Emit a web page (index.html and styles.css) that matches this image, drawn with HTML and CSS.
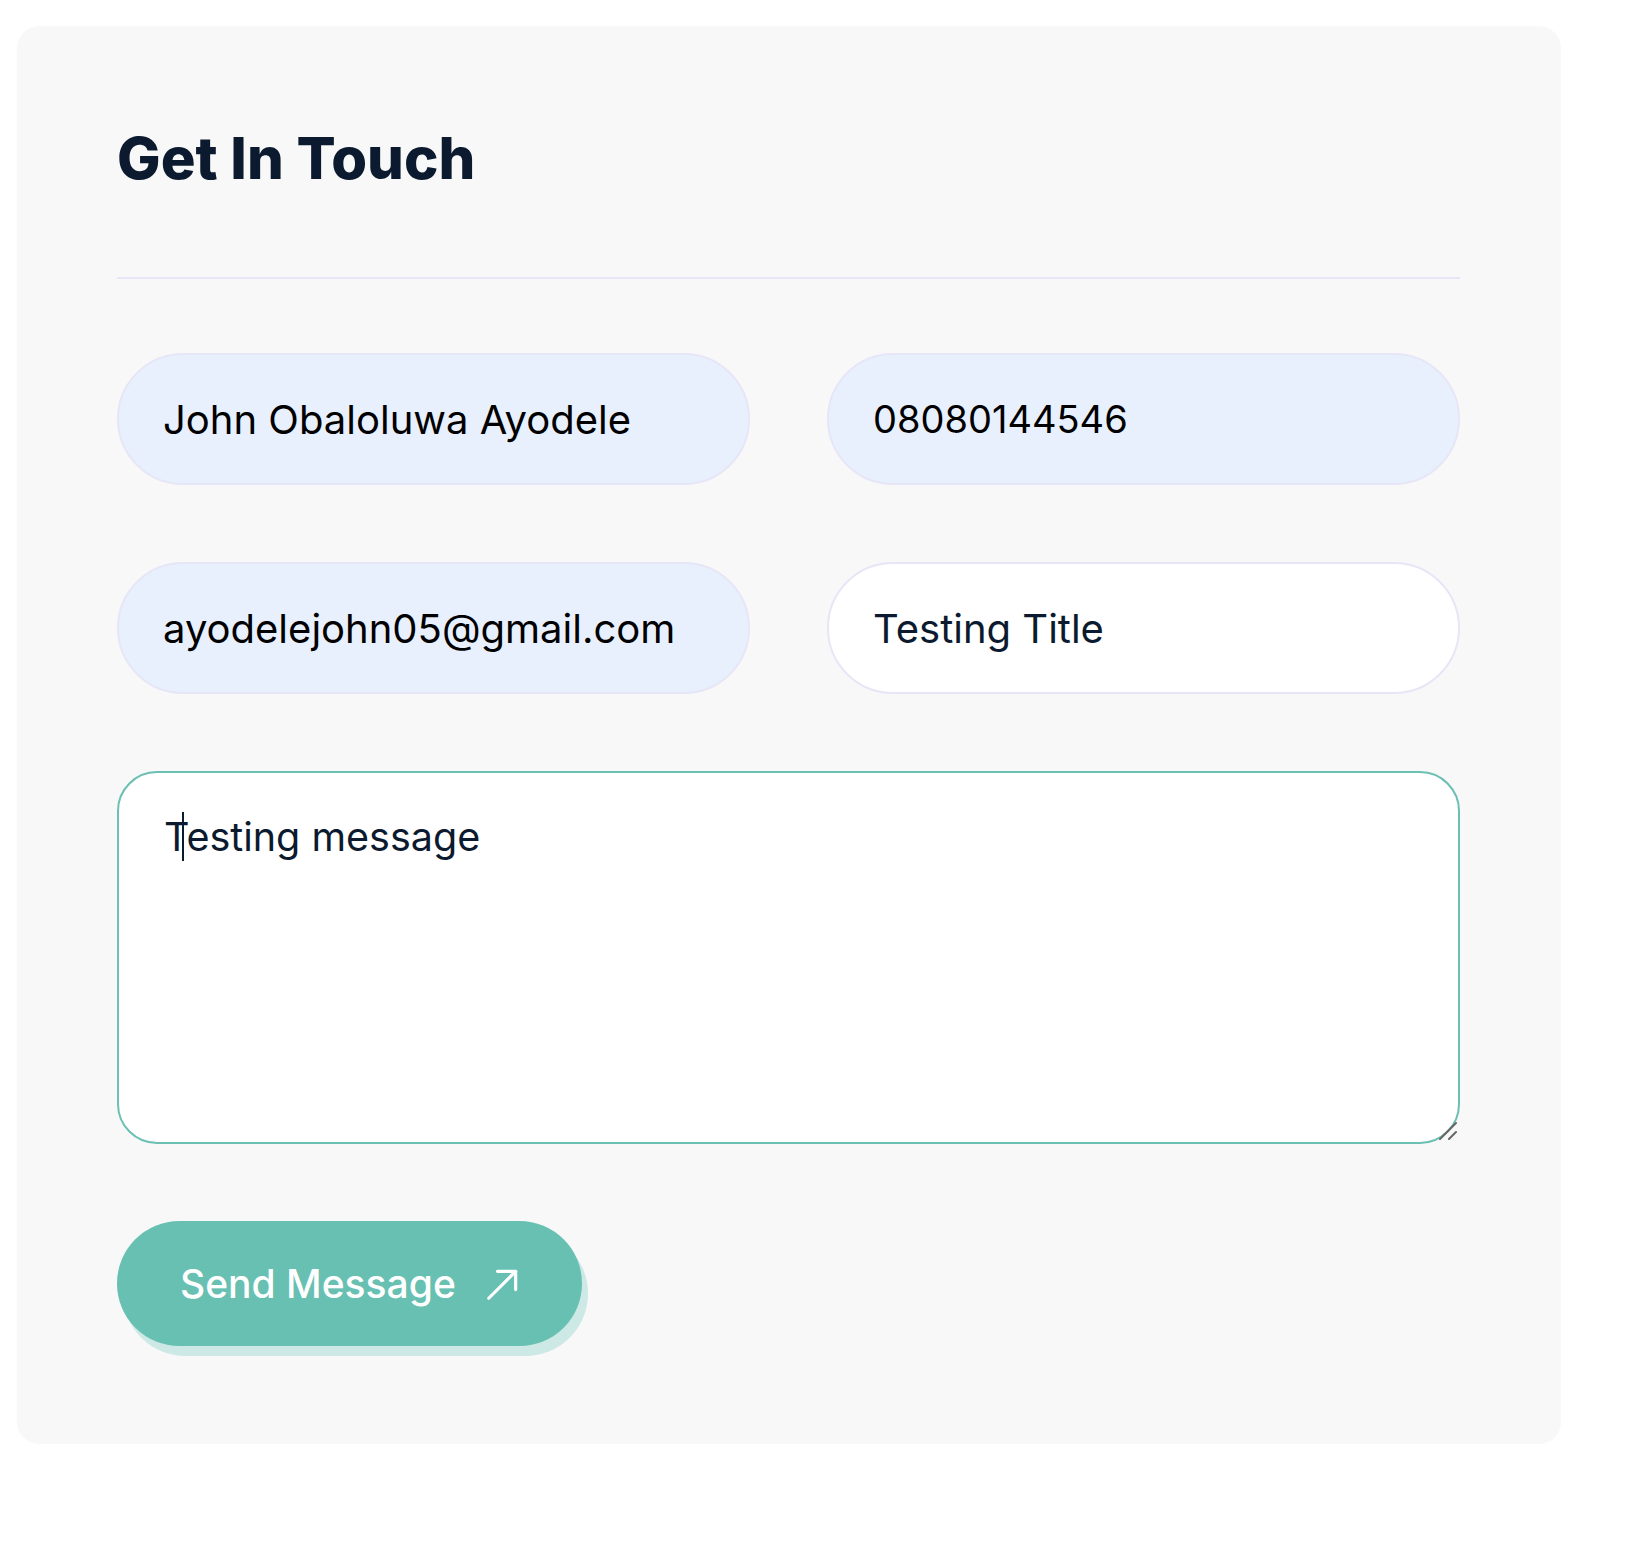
FILE: index.html
```html
<!DOCTYPE html>
<html lang="en">
<head>
    <meta charset="UTF-8">
    <meta name="viewport" content="width=device-width, initial-scale=1.0">
    <title>Get In Touch</title>
    <link rel="stylesheet" href="styles.css">
</head>
<body>
    <div class="card">
        <h1>Get In Touch</h1>
        <div class="divider"></div>
        <form class="contact-form">
            <div class="row">
                <input type="text" class="field filled" value="John Obaloluwa Ayodele">
                <input type="tel" class="field filled phone" value="08080144546">
            </div>
            <div class="row">
                <input type="email" class="field filled" value="ayodelejohn05@gmail.com">
                <input type="text" class="field" value="Testing Title">
            </div>
            <div class="message-wrap">
                <textarea class="message">Testing message</textarea>
                <span class="caret"></span>
                <svg class="grip" width="18" height="18" viewBox="0 0 18 18" fill="none" stroke="#666" stroke-width="2" stroke-linecap="round">
                    <path d="M1 17 L17 1"/>
                    <path d="M10 17 L17 10"/>
                </svg>
            </div>
            <div class="actions">
                <button type="button" class="send">
                    Send Message
                    <svg width="38" height="38" viewBox="0 0 24 24" fill="none" stroke="#fff" stroke-width="2" stroke-linecap="round" stroke-linejoin="round">
                        <path d="M3 21 L20 4"/>
                        <path d="M8.5 4 H20 V15.5"/>
                    </svg>
                </button>
            </div>
        </form>
    </div>
</body>
</html>
```

FILE: styles.css
```css
body {
    margin: 0;
    background: #fff;
    font-family: 'Inter', 'Noto Sans', sans-serif;
}
.card {
    margin: 26px 0 0 17px;
    width: 1544px;
    height: 1418px;
    box-sizing: border-box;
    padding: 96px 101px 0 100px;
    background: #f8f8f8;
    border-radius: 22px;
}
h1 {
    margin: 0;
    font-size: 58px;
    line-height: 72px;
    font-weight: 800;
    color: #0b1a2e;
    letter-spacing: 0;
}
.divider {
    height: 2px;
    background: #e6e6f7;
    margin-top: 83px;
}
.contact-form {
    display: flex;
    flex-direction: column;
    gap: 77px;
    margin-top: 74px;
}
.row {
    display: grid;
    grid-template-columns: 1fr 1fr;
    gap: 77px;
}
.field {
    height: 132px;
    box-sizing: border-box;
    padding: 0 44px;
    border: 2px solid #e6e6f7;
    border-radius: 66px;
    background: #fff;
    font-family: 'Inter', 'Noto Sans', sans-serif;
    font-size: 40px;
    color: #0b1a2e;
    outline: none;
    min-width: 0;
}
.field.filled {
    background: #e8f0fe;
    color: #000;
}
.field.phone {
    font-size: 38px;
}
.message-wrap {
    position: relative;
}
.message {
    display: block;
    width: 100%;
    height: 373px;
    box-sizing: border-box;
    padding: 40px 45px;
    border: 2px solid #6bbfb3;
    border-radius: 40px;
    background: #fff;
    font-family: 'Inter', 'Noto Sans', sans-serif;
    font-size: 39.5px;
    color: #0b1a2e;
    outline: none;
    resize: none;
}
.caret {
    position: absolute;
    left: 65px;
    top: 41px;
    width: 2px;
    height: 49px;
    background: #0b1a2e;
}
.grip {
    position: absolute;
    right: 3px;
    bottom: 4px;
}
.send {
    display: flex;
    align-items: center;
    gap: 28px;
    height: 125px;
    padding: 0 60px 0 63px;
    border: none;
    border-radius: 63px;
    background: #67c0b2;
    color: #fff;
    font-family: 'Inter', 'Noto Sans', sans-serif;
    font-size: 39px;
    font-weight: 500;
    box-shadow: 6px 10px 0 #cde9e5;
    cursor: pointer;
}
```
